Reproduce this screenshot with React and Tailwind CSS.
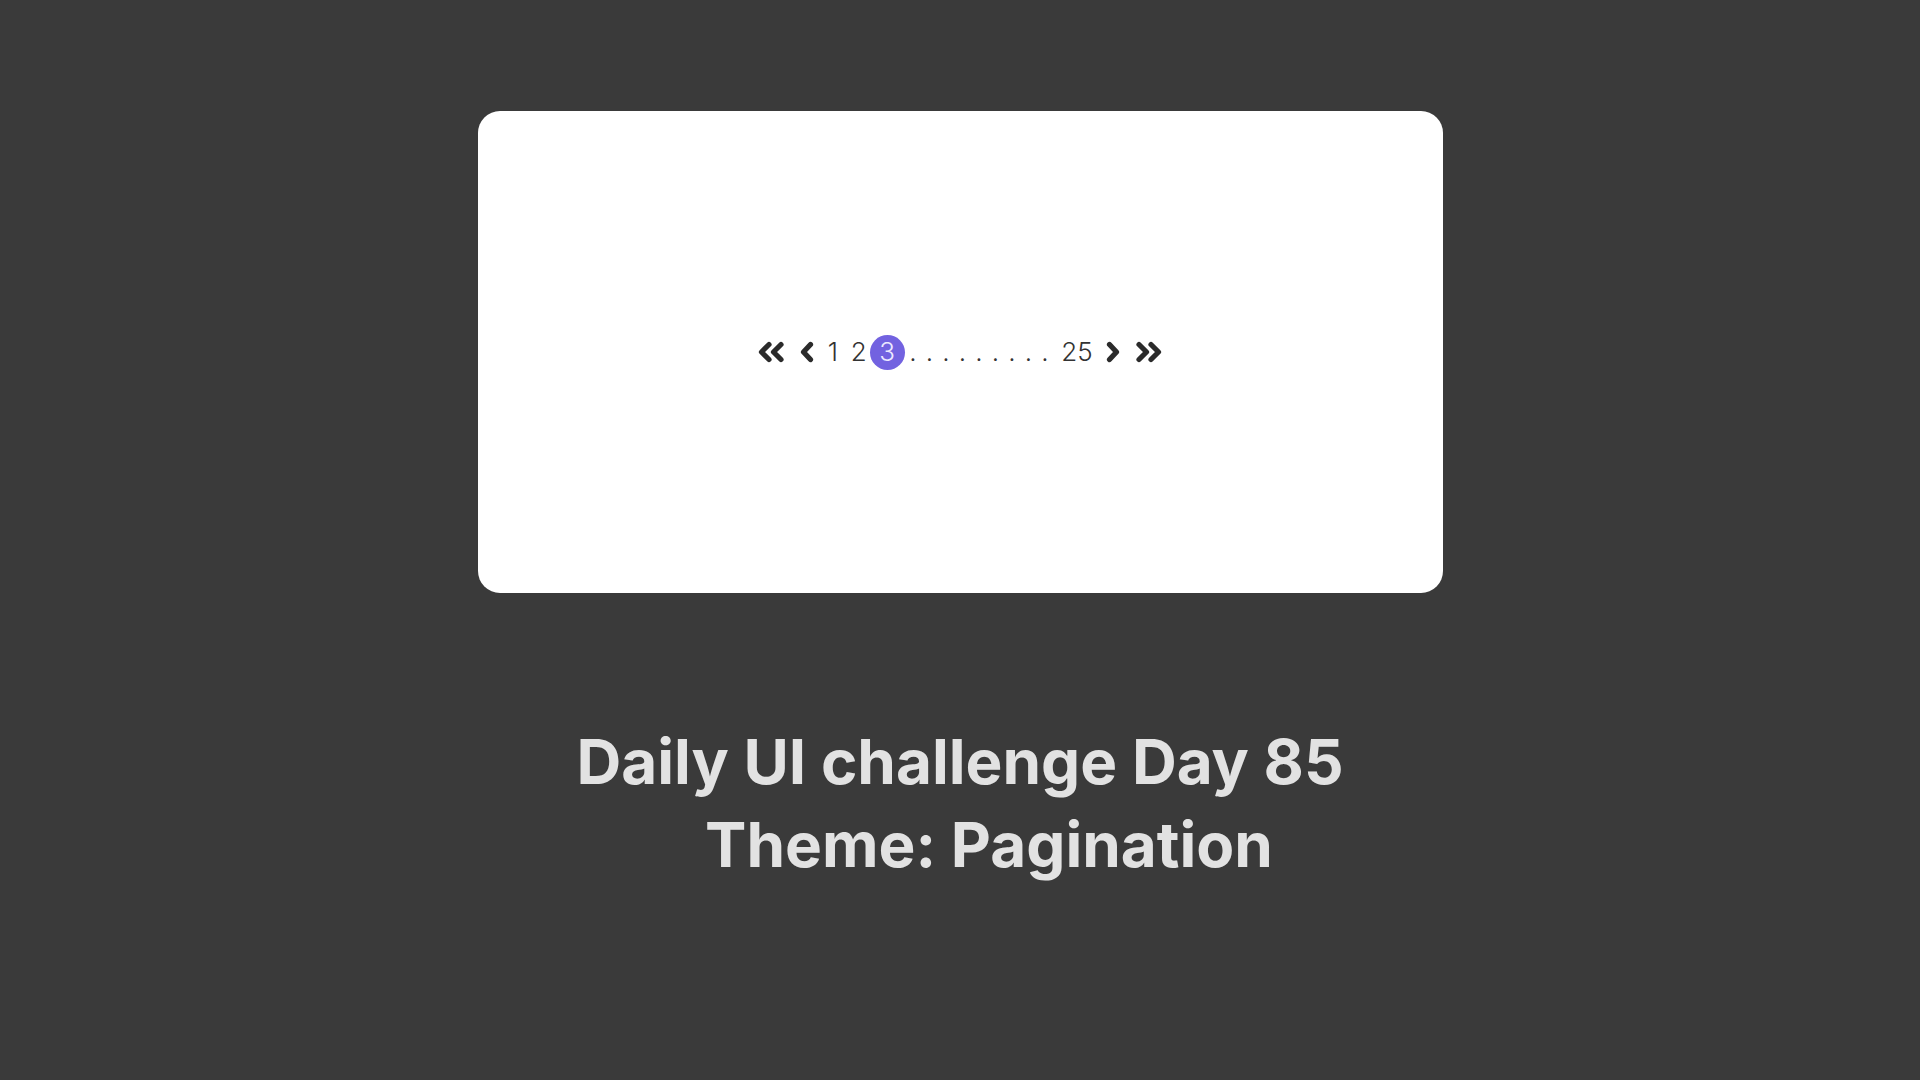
import React from "react";

/* Daily UI 085 – pagination card on a dark backdrop */

const Chevron = ({ dir = "left", double = false }) => {
  const w = double ? 28 : 14;
  const paths =
    dir === "left"
      ? double
        ? ["M12 3.5 L4.5 11 L12 18.5", "M24 3.5 L16.5 11 L24 18.5"]
        : ["M10.5 3.5 L3.5 11 L10.5 18.5"]
      : double
      ? ["M4 3.5 L11.5 11 L4 18.5", "M16 3.5 L23.5 11 L16 18.5"]
      : ["M3.5 3.5 L10.5 11 L3.5 18.5"];
  return (
    <svg width={w} height="22" viewBox={`0 0 ${w} 22`} fill="none">
      {paths.map((d) => (
        <path
          key={d}
          d={d}
          stroke="#2b2b2b"
          strokeWidth="5.2"
          strokeLinecap="round"
          strokeLinejoin="round"
        />
      ))}
    </svg>
  );
};

export default function App() {
  const dots = Array.from({ length: 9 });

  return (
    <div
      className="w-full h-[1080px] bg-[#3a3a3a] overflow-hidden"
      style={{ fontFamily: "Inter, 'Noto Sans', sans-serif" }}
    >
      {/* === Card === */}
      <div className="mx-auto mt-[111px] w-[965px] h-[482px] bg-white rounded-[22px] flex items-center justify-center">
        <div className="flex items-center h-[36px] text-[#333] text-[26px] font-light leading-none">
          <Chevron dir="left" double />
          <div className="ml-[15px]">
            <Chevron dir="left" />
          </div>
          <span className="ml-[12px] w-[14px] text-center">1</span>
          <span className="ml-[11px] w-[14px] text-center">2</span>
          <span className="ml-[5px] w-[35px] h-[35px] rounded-full bg-[#7262e0] text-[#ece9ff] flex items-center justify-center">
            3
          </span>
          <div className="flex items-center">
            {dots.map((_, i) => (
              <span key={i} className="w-[16.5px] text-center">
                .
              </span>
            ))}
          </div>
          <span className="ml-[8px] w-[29px] text-center">25</span>
          <div className="ml-[16px]">
            <Chevron dir="right" />
          </div>
          <div className="ml-[15px]">
            <Chevron dir="right" double />
          </div>
        </div>
      </div>

      {/* === Caption === */}
      <div className="mt-[127px] text-center text-[#e2e2e2] text-[62px] font-bold leading-[83px]">
        <div>Daily UI challenge Day 85</div>
        <div className="pl-[58px]">Theme: Pagination</div>
      </div>
    </div>
  );
}
